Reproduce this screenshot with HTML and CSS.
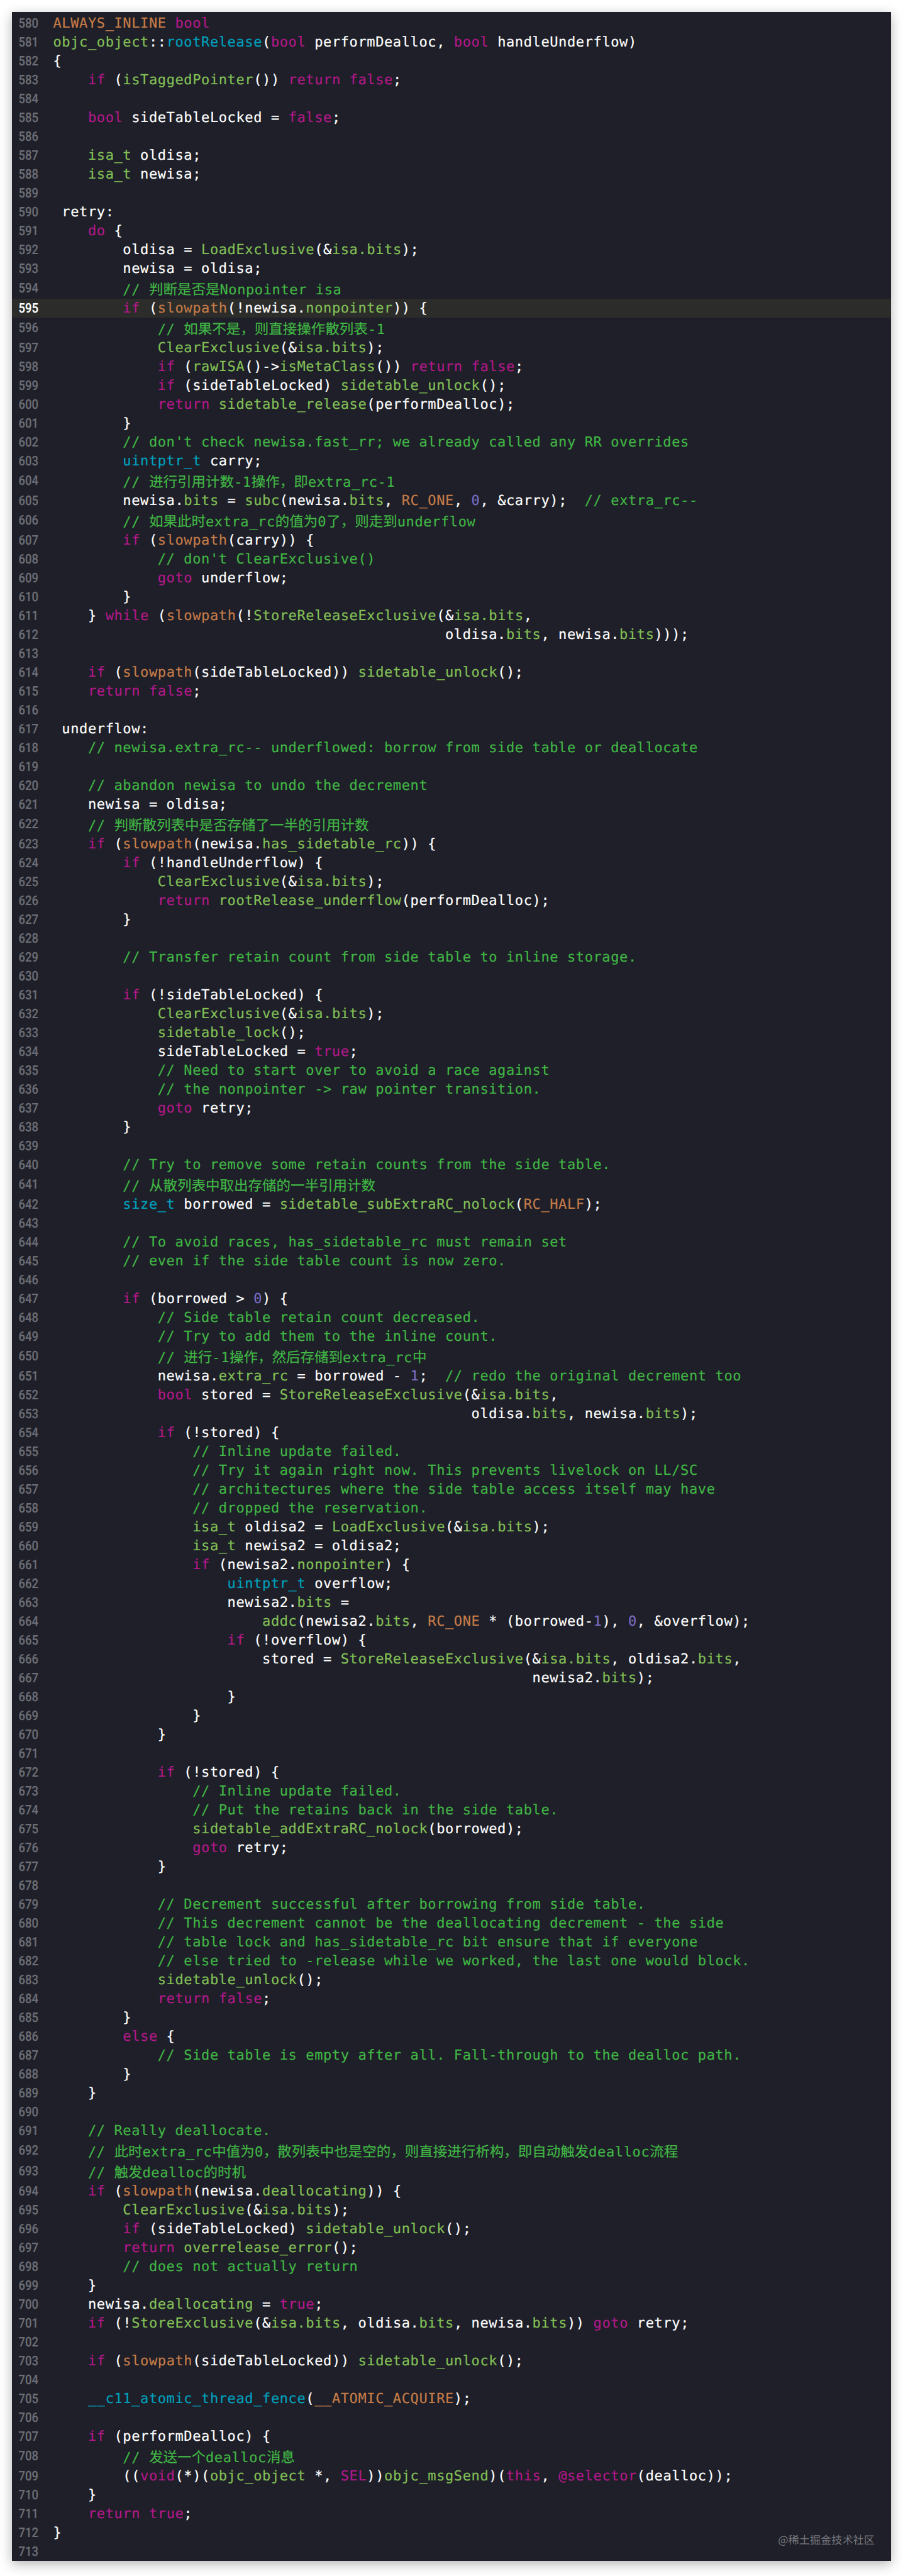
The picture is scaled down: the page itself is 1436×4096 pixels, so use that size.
FILE: index.html
```html
<!DOCTYPE html>
<html lang="zh-CN">
<head>
<meta charset="utf-8">
<title>objc_object::rootRelease</title>
<link rel="stylesheet" href="styles.css">
</head>
<body>
<main class="panel">
<div class="ln"><span class="no">580</span><code class="src"><span class="m">ALWAYS_INLINE</span> <span class="k">bool</span></code></div>
<div class="ln"><span class="no">581</span><code class="src"><span class="f">objc_object</span>::<span class="t">rootRelease</span>(<span class="k">bool</span> performDealloc, <span class="k">bool</span> handleUnderflow)</code></div>
<div class="ln"><span class="no">582</span><code class="src">{</code></div>
<div class="ln"><span class="no">583</span><code class="src">    <span class="k">if</span> (<span class="f">isTaggedPointer</span>()) <span class="k">return</span> <span class="k">false</span>;</code></div>
<div class="ln"><span class="no">584</span><code class="src"></code></div>
<div class="ln"><span class="no">585</span><code class="src">    <span class="k">bool</span> sideTableLocked = <span class="k">false</span>;</code></div>
<div class="ln"><span class="no">586</span><code class="src"></code></div>
<div class="ln"><span class="no">587</span><code class="src">    <span class="f">isa_t</span> oldisa;</code></div>
<div class="ln"><span class="no">588</span><code class="src">    <span class="f">isa_t</span> newisa;</code></div>
<div class="ln"><span class="no">589</span><code class="src"></code></div>
<div class="ln"><span class="no">590</span><code class="src"> retry:</code></div>
<div class="ln"><span class="no">591</span><code class="src">    <span class="k">do</span> {</code></div>
<div class="ln"><span class="no">592</span><code class="src">        oldisa = <span class="f">LoadExclusive</span>(&amp;<span class="f">isa.bits</span>);</code></div>
<div class="ln"><span class="no">593</span><code class="src">        newisa = oldisa;</code></div>
<div class="ln tall"><span class="no">594</span><code class="src">        <span class="c">// <span class="zh">判断是否是</span>Nonpointer isa</span></code></div>
<div class="ln cur"><span class="no">595</span><code class="src">        <span class="k">if</span> (<span class="m">slowpath</span>(!newisa.<span class="f">nonpointer</span>)) {</code></div>
<div class="ln tall"><span class="no">596</span><code class="src">            <span class="c">// <span class="zh">如果不是，则直接操作散列表</span>-1</span></code></div>
<div class="ln"><span class="no">597</span><code class="src">            <span class="f">ClearExclusive</span>(&amp;<span class="f">isa.bits</span>);</code></div>
<div class="ln"><span class="no">598</span><code class="src">            <span class="k">if</span> (<span class="f">rawISA</span>()-&gt;<span class="f">isMetaClass</span>()) <span class="k">return</span> <span class="k">false</span>;</code></div>
<div class="ln"><span class="no">599</span><code class="src">            <span class="k">if</span> (sideTableLocked) <span class="f">sidetable_unlock</span>();</code></div>
<div class="ln"><span class="no">600</span><code class="src">            <span class="k">return</span> <span class="f">sidetable_release</span>(performDealloc);</code></div>
<div class="ln"><span class="no">601</span><code class="src">        }</code></div>
<div class="ln"><span class="no">602</span><code class="src">        <span class="c">// don't check newisa.fast_rr; we already called any RR overrides</span></code></div>
<div class="ln"><span class="no">603</span><code class="src">        <span class="t">uintptr_t</span> carry;</code></div>
<div class="ln tall"><span class="no">604</span><code class="src">        <span class="c">// <span class="zh">进行引用计数</span>-1<span class="zh">操作，即</span>extra_rc-1</span></code></div>
<div class="ln"><span class="no">605</span><code class="src">        newisa.<span class="f">bits</span> = <span class="f">subc</span>(newisa.<span class="f">bits</span>, <span class="m">RC_ONE</span>, <span class="n">0</span>, &amp;carry);  <span class="c">// extra_rc--</span></code></div>
<div class="ln tall"><span class="no">606</span><code class="src">        <span class="c">// <span class="zh">如果此时</span>extra_rc<span class="zh">的值为</span>0<span class="zh">了，则走到</span>underflow</span></code></div>
<div class="ln"><span class="no">607</span><code class="src">        <span class="k">if</span> (<span class="m">slowpath</span>(carry)) {</code></div>
<div class="ln"><span class="no">608</span><code class="src">            <span class="c">// don't ClearExclusive()</span></code></div>
<div class="ln"><span class="no">609</span><code class="src">            <span class="k">goto</span> underflow;</code></div>
<div class="ln"><span class="no">610</span><code class="src">        }</code></div>
<div class="ln"><span class="no">611</span><code class="src">    } <span class="k">while</span> (<span class="m">slowpath</span>(!<span class="f">StoreReleaseExclusive</span>(&amp;<span class="f">isa.bits</span>,</code></div>
<div class="ln"><span class="no">612</span><code class="src">                                             oldisa.<span class="f">bits</span>, newisa.<span class="f">bits</span>)));</code></div>
<div class="ln"><span class="no">613</span><code class="src"></code></div>
<div class="ln"><span class="no">614</span><code class="src">    <span class="k">if</span> (<span class="m">slowpath</span>(sideTableLocked)) <span class="f">sidetable_unlock</span>();</code></div>
<div class="ln"><span class="no">615</span><code class="src">    <span class="k">return</span> <span class="k">false</span>;</code></div>
<div class="ln"><span class="no">616</span><code class="src"></code></div>
<div class="ln"><span class="no">617</span><code class="src"> underflow:</code></div>
<div class="ln"><span class="no">618</span><code class="src">    <span class="c">// newisa.extra_rc-- underflowed: borrow from side table or deallocate</span></code></div>
<div class="ln"><span class="no">619</span><code class="src"></code></div>
<div class="ln"><span class="no">620</span><code class="src">    <span class="c">// abandon newisa to undo the decrement</span></code></div>
<div class="ln"><span class="no">621</span><code class="src">    newisa = oldisa;</code></div>
<div class="ln tall"><span class="no">622</span><code class="src">    <span class="c">// <span class="zh">判断散列表中是否存储了一半的引用计数</span></span></code></div>
<div class="ln"><span class="no">623</span><code class="src">    <span class="k">if</span> (<span class="m">slowpath</span>(newisa.<span class="f">has_sidetable_rc</span>)) {</code></div>
<div class="ln"><span class="no">624</span><code class="src">        <span class="k">if</span> (!handleUnderflow) {</code></div>
<div class="ln"><span class="no">625</span><code class="src">            <span class="f">ClearExclusive</span>(&amp;<span class="f">isa.bits</span>);</code></div>
<div class="ln"><span class="no">626</span><code class="src">            <span class="k">return</span> <span class="f">rootRelease_underflow</span>(performDealloc);</code></div>
<div class="ln"><span class="no">627</span><code class="src">        }</code></div>
<div class="ln"><span class="no">628</span><code class="src"></code></div>
<div class="ln"><span class="no">629</span><code class="src">        <span class="c">// Transfer retain count from side table to inline storage.</span></code></div>
<div class="ln"><span class="no">630</span><code class="src"></code></div>
<div class="ln"><span class="no">631</span><code class="src">        <span class="k">if</span> (!sideTableLocked) {</code></div>
<div class="ln"><span class="no">632</span><code class="src">            <span class="f">ClearExclusive</span>(&amp;<span class="f">isa.bits</span>);</code></div>
<div class="ln"><span class="no">633</span><code class="src">            <span class="f">sidetable_lock</span>();</code></div>
<div class="ln"><span class="no">634</span><code class="src">            sideTableLocked = <span class="k">true</span>;</code></div>
<div class="ln"><span class="no">635</span><code class="src">            <span class="c">// Need to start over to avoid a race against</span></code></div>
<div class="ln"><span class="no">636</span><code class="src">            <span class="c">// the nonpointer -&gt; raw pointer transition.</span></code></div>
<div class="ln"><span class="no">637</span><code class="src">            <span class="k">goto</span> retry;</code></div>
<div class="ln"><span class="no">638</span><code class="src">        }</code></div>
<div class="ln"><span class="no">639</span><code class="src"></code></div>
<div class="ln"><span class="no">640</span><code class="src">        <span class="c">// Try to remove some retain counts from the side table.</span></code></div>
<div class="ln tall"><span class="no">641</span><code class="src">        <span class="c">// <span class="zh">从散列表中取出存储的一半引用计数</span></span></code></div>
<div class="ln"><span class="no">642</span><code class="src">        <span class="t">size_t</span> borrowed = <span class="f">sidetable_subExtraRC_nolock</span>(<span class="m">RC_HALF</span>);</code></div>
<div class="ln"><span class="no">643</span><code class="src"></code></div>
<div class="ln"><span class="no">644</span><code class="src">        <span class="c">// To avoid races, has_sidetable_rc must remain set</span></code></div>
<div class="ln"><span class="no">645</span><code class="src">        <span class="c">// even if the side table count is now zero.</span></code></div>
<div class="ln"><span class="no">646</span><code class="src"></code></div>
<div class="ln"><span class="no">647</span><code class="src">        <span class="k">if</span> (borrowed &gt; <span class="n">0</span>) {</code></div>
<div class="ln"><span class="no">648</span><code class="src">            <span class="c">// Side table retain count decreased.</span></code></div>
<div class="ln"><span class="no">649</span><code class="src">            <span class="c">// Try to add them to the inline count.</span></code></div>
<div class="ln tall"><span class="no">650</span><code class="src">            <span class="c">// <span class="zh">进行</span>-1<span class="zh">操作，然后存储到</span>extra_rc<span class="zh">中</span></span></code></div>
<div class="ln"><span class="no">651</span><code class="src">            newisa.<span class="f">extra_rc</span> = borrowed - <span class="n">1</span>;  <span class="c">// redo the original decrement too</span></code></div>
<div class="ln"><span class="no">652</span><code class="src">            <span class="k">bool</span> stored = <span class="f">StoreReleaseExclusive</span>(&amp;<span class="f">isa.bits</span>,</code></div>
<div class="ln"><span class="no">653</span><code class="src">                                                oldisa.<span class="f">bits</span>, newisa.<span class="f">bits</span>);</code></div>
<div class="ln"><span class="no">654</span><code class="src">            <span class="k">if</span> (!stored) {</code></div>
<div class="ln"><span class="no">655</span><code class="src">                <span class="c">// Inline update failed.</span></code></div>
<div class="ln"><span class="no">656</span><code class="src">                <span class="c">// Try it again right now. This prevents livelock on LL/SC</span></code></div>
<div class="ln"><span class="no">657</span><code class="src">                <span class="c">// architectures where the side table access itself may have</span></code></div>
<div class="ln"><span class="no">658</span><code class="src">                <span class="c">// dropped the reservation.</span></code></div>
<div class="ln"><span class="no">659</span><code class="src">                <span class="f">isa_t</span> oldisa2 = <span class="f">LoadExclusive</span>(&amp;<span class="f">isa.bits</span>);</code></div>
<div class="ln"><span class="no">660</span><code class="src">                <span class="f">isa_t</span> newisa2 = oldisa2;</code></div>
<div class="ln"><span class="no">661</span><code class="src">                <span class="k">if</span> (newisa2.<span class="f">nonpointer</span>) {</code></div>
<div class="ln"><span class="no">662</span><code class="src">                    <span class="t">uintptr_t</span> overflow;</code></div>
<div class="ln"><span class="no">663</span><code class="src">                    newisa2.<span class="f">bits</span> =</code></div>
<div class="ln"><span class="no">664</span><code class="src">                        <span class="f">addc</span>(newisa2.<span class="f">bits</span>, <span class="m">RC_ONE</span> * (borrowed-<span class="n">1</span>), <span class="n">0</span>, &amp;overflow);</code></div>
<div class="ln"><span class="no">665</span><code class="src">                    <span class="k">if</span> (!overflow) {</code></div>
<div class="ln"><span class="no">666</span><code class="src">                        stored = <span class="f">StoreReleaseExclusive</span>(&amp;<span class="f">isa.bits</span>, oldisa2.<span class="f">bits</span>,</code></div>
<div class="ln"><span class="no">667</span><code class="src">                                                       newisa2.<span class="f">bits</span>);</code></div>
<div class="ln"><span class="no">668</span><code class="src">                    }</code></div>
<div class="ln"><span class="no">669</span><code class="src">                }</code></div>
<div class="ln"><span class="no">670</span><code class="src">            }</code></div>
<div class="ln"><span class="no">671</span><code class="src"></code></div>
<div class="ln"><span class="no">672</span><code class="src">            <span class="k">if</span> (!stored) {</code></div>
<div class="ln"><span class="no">673</span><code class="src">                <span class="c">// Inline update failed.</span></code></div>
<div class="ln"><span class="no">674</span><code class="src">                <span class="c">// Put the retains back in the side table.</span></code></div>
<div class="ln"><span class="no">675</span><code class="src">                <span class="f">sidetable_addExtraRC_nolock</span>(borrowed);</code></div>
<div class="ln"><span class="no">676</span><code class="src">                <span class="k">goto</span> retry;</code></div>
<div class="ln"><span class="no">677</span><code class="src">            }</code></div>
<div class="ln"><span class="no">678</span><code class="src"></code></div>
<div class="ln"><span class="no">679</span><code class="src">            <span class="c">// Decrement successful after borrowing from side table.</span></code></div>
<div class="ln"><span class="no">680</span><code class="src">            <span class="c">// This decrement cannot be the deallocating decrement - the side</span></code></div>
<div class="ln"><span class="no">681</span><code class="src">            <span class="c">// table lock and has_sidetable_rc bit ensure that if everyone</span></code></div>
<div class="ln"><span class="no">682</span><code class="src">            <span class="c">// else tried to -release while we worked, the last one would block.</span></code></div>
<div class="ln"><span class="no">683</span><code class="src">            <span class="f">sidetable_unlock</span>();</code></div>
<div class="ln"><span class="no">684</span><code class="src">            <span class="k">return</span> <span class="k">false</span>;</code></div>
<div class="ln"><span class="no">685</span><code class="src">        }</code></div>
<div class="ln"><span class="no">686</span><code class="src">        <span class="k">else</span> {</code></div>
<div class="ln"><span class="no">687</span><code class="src">            <span class="c">// Side table is empty after all. Fall-through to the dealloc path.</span></code></div>
<div class="ln"><span class="no">688</span><code class="src">        }</code></div>
<div class="ln"><span class="no">689</span><code class="src">    }</code></div>
<div class="ln"><span class="no">690</span><code class="src"></code></div>
<div class="ln"><span class="no">691</span><code class="src">    <span class="c">// Really deallocate.</span></code></div>
<div class="ln tall"><span class="no">692</span><code class="src">    <span class="c">// <span class="zh">此时</span>extra_rc<span class="zh">中值为</span>0<span class="zh">，散列表中也是空的，则直接进行析构，即自动触发</span>dealloc<span class="zh">流程</span></span></code></div>
<div class="ln tall"><span class="no">693</span><code class="src">    <span class="c">// <span class="zh">触发</span>dealloc<span class="zh">的时机</span></span></code></div>
<div class="ln"><span class="no">694</span><code class="src">    <span class="k">if</span> (<span class="m">slowpath</span>(newisa.<span class="f">deallocating</span>)) {</code></div>
<div class="ln"><span class="no">695</span><code class="src">        <span class="f">ClearExclusive</span>(&amp;<span class="f">isa.bits</span>);</code></div>
<div class="ln"><span class="no">696</span><code class="src">        <span class="k">if</span> (sideTableLocked) <span class="f">sidetable_unlock</span>();</code></div>
<div class="ln"><span class="no">697</span><code class="src">        <span class="k">return</span> <span class="f">overrelease_error</span>();</code></div>
<div class="ln"><span class="no">698</span><code class="src">        <span class="c">// does not actually return</span></code></div>
<div class="ln"><span class="no">699</span><code class="src">    }</code></div>
<div class="ln"><span class="no">700</span><code class="src">    newisa.<span class="f">deallocating</span> = <span class="k">true</span>;</code></div>
<div class="ln"><span class="no">701</span><code class="src">    <span class="k">if</span> (!<span class="f">StoreExclusive</span>(&amp;<span class="f">isa.bits</span>, oldisa.<span class="f">bits</span>, newisa.<span class="f">bits</span>)) <span class="k">goto</span> retry;</code></div>
<div class="ln"><span class="no">702</span><code class="src"></code></div>
<div class="ln"><span class="no">703</span><code class="src">    <span class="k">if</span> (<span class="m">slowpath</span>(sideTableLocked)) <span class="f">sidetable_unlock</span>();</code></div>
<div class="ln"><span class="no">704</span><code class="src"></code></div>
<div class="ln"><span class="no">705</span><code class="src">    <span class="t">__c11_atomic_thread_fence</span>(<span class="m">__ATOMIC_ACQUIRE</span>);</code></div>
<div class="ln"><span class="no">706</span><code class="src"></code></div>
<div class="ln"><span class="no">707</span><code class="src">    <span class="k">if</span> (performDealloc) {</code></div>
<div class="ln tall"><span class="no">708</span><code class="src">        <span class="c">// <span class="zh">发送一个</span>dealloc<span class="zh">消息</span></span></code></div>
<div class="ln"><span class="no">709</span><code class="src">        ((<span class="k">void</span>(*)(<span class="f">objc_object</span> *, <span class="k">SEL</span>))<span class="f">objc_msgSend</span>)(<span class="k">this</span>, <span class="k">@selector</span>(dealloc));</code></div>
<div class="ln"><span class="no">710</span><code class="src">    }</code></div>
<div class="ln"><span class="no">711</span><code class="src">    <span class="k">return</span> <span class="k">true</span>;</code></div>
<div class="ln"><span class="no">712</span><code class="src">}</code></div>
<div class="ln"><span class="no">713</span><code class="src"></code></div>
<p class="mark">@稀土掘金技术社区</p>
</main>
</body>
</html>
```

FILE: styles.css
```css
html, body {
  margin: 0;
  background: #fff;
}

body {
  padding: 19px 19px 23px;
}

.panel {
  position: relative;
  padding-top: 3px;
  background: #1e1f28;
  box-shadow: 0 5px 18px rgba(0, 0, 0, 0.3);
  color: #fff;
  font-family: "DejaVu Sans Mono", "Noto Sans CJK SC", monospace;
  font-size: 22px;
  letter-spacing: 0.61px;
  text-rendering: geometricPrecision;
  -webkit-text-stroke: 0.2px;
}

.ln {
  display: flex;
  height: 30px;
  line-height: 30px;
}

.ln.tall {
  height: 33px;
  line-height: 33px;
}

.ln.cur {
  background: #2c2d2a;
}

.no {
  flex: none;
  box-sizing: border-box;
  width: 65.5px;
  padding: 1px 0 0 10.5px;
  color: #6c6d75;
  font-family: Roboto, sans-serif;
  font-size: 21px;
  font-weight: 500;
  letter-spacing: 0;
  transform: scaleX(0.88);
  transform-origin: 10.5px 0;
}

.cur .no {
  color: #fff;
}

.src {
  padding-top: 1px;
  font: inherit;
  letter-spacing: inherit;
  white-space: pre;
}

.k { color: #b21889; }
.c { color: #41b645; }
.f { color: #83c057; }
.t { color: #00a0be; }
.m { color: #c67c48; }
.n { color: #786dc4; }

.zh {
  font-family: "Noto Sans CJK SC", sans-serif;
  font-size: 22.5px;
  letter-spacing: 0;
}

.mark {
  position: absolute;
  right: 26px;
  bottom: 25px;
  margin: 0;
  color: #75767c;
  font-family: "Noto Sans CJK SC", sans-serif;
  font-size: 17.2px;
  line-height: 18px;
  letter-spacing: 0;
  -webkit-text-stroke: 0;
}
```
